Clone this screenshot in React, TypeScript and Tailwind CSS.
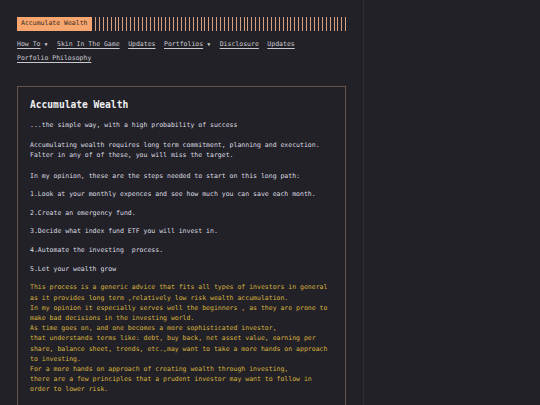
const navLinks: Array<{ label: string; caret?: boolean }> = [
  { label: "How To", caret: true },
  { label: "Skin In The Game" },
  { label: "Updates" },
  { label: "Portfolios", caret: true },
  { label: "Disclosure" },
  { label: "Updates" },
  { label: "Porfolio Philosophy" },
];

const steps = [
  "1.Look at your monthly expences and see how much you can save each month.",
  "2.Create an emergency fund.",
  "3.Decide what index fund ETF you will invest in.",
  "4.Automate the investing\u00a0 process.",
  "5.Let your wealth grow",
];

const advice = [
  "This process is a generic advice that fits all types of investors in general",
  "as it provides long term ,relatively low risk wealth accumulation.",
  "In my opinion it especially serves well the beginners , as they are prone to",
  "make bad decisions in the investing world.",
  "As time goes on, and one becomes a more sophisticated investor,",
  "that understands terms like: debt, buy back, net asset value, earning per",
  "share, balance sheet, trends, etc.,may want to take a more hands on approach",
  "to investing.",
  "For a more hands on approach of creating wealth through investing,",
  "there are a few principles that a prudent investor may want to follow in",
  "order to lower risk.",
];

export default function App() {
  return (
    <div className="flex h-[405px] w-[540px] overflow-hidden bg-[#222128] font-['DejaVu_Sans_Mono',monospace] text-[6.5px] text-[#dcdce0]">
      <div className="w-[364px] shrink-0 border-r border-[#2e2d34] px-[17px] pt-[17px]">
        <header className="flex h-[14px] items-stretch">
          <div className="flex items-center bg-[#f7a66f] px-[4px] text-[#3a2a20]">
            Accumulate Wealth
          </div>
          <div className="ml-[3px] flex-1 bg-[repeating-linear-gradient(90deg,#d9a080_0_1px,transparent_1px_3.91px)]" />
        </header>

        <nav className="mt-[6px] flex flex-wrap gap-x-[8.5px] leading-[14px] text-[#c9c9d0]">
          {navLinks.map((link, i) => (
            <span key={i} className="flex items-center gap-[4px]">
              <a className="underline underline-offset-[1.5px]">{link.label}</a>
              {link.caret ? <span className="pr-[1px] text-[5px]">▼</span> : null}
            </span>
          ))}
        </nav>

        <section className="mt-[21px] border border-[#6a5447] px-[12px] pt-[11px] pb-6 leading-[10.2px]">
          <h1 className="text-[9.6px] font-bold leading-[14px] text-[#f0f0f2]">
            Accumulate Wealth
          </h1>
          <p className="mt-[8px]">...the simple way, with a high probability of success</p>
          <p className="mt-[10px]">
            Accumulating wealth requires long term commitment, planning and execution.
            <br />
            Falter in any of of these, you will miss the target.
          </p>
          <p className="mt-[10px]">In my opinion, these are the steps needed to start on this long path:</p>
          {steps.map((step) => (
            <p key={step} className="mt-[8.4px]">
              {step}
            </p>
          ))}
          <p className="mt-[8.6px] text-[#d8b23c]">
            {advice.map((line) => (
              <span key={line} className="block">
                {line}
              </span>
            ))}
          </p>
        </section>
      </div>
      <div className="flex-1" />
    </div>
  );
}
